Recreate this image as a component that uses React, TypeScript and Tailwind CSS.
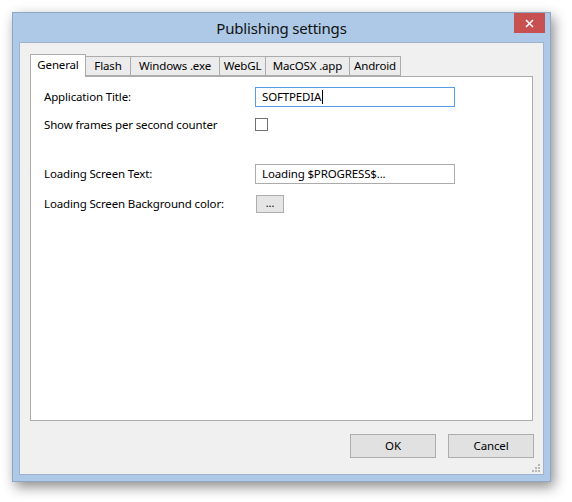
import React from 'react';

const tabs = [
  { label: 'General', w: 'w-[56px]' },
  { label: 'Flash', w: 'w-[46px]' },
  { label: 'Windows .exe', w: 'w-[90px]' },
  { label: 'WebGL', w: 'w-[47px]' },
  { label: 'MacOSX .app', w: 'w-[85px]' },
  { label: 'Android', w: 'w-[52px]' },
];

const font = { fontFamily: '"Noto Sans", "Open Sans", sans-serif' };

const App: React.FC = () => {
  return (
    <div className="w-[572px] h-[502px] bg-white pt-[12px] pl-[12px]" style={font}>
      {/* Window frame */}
      <div className="relative w-[539px] h-[470px] border border-[#8fa7c3] bg-[#adc9e7] flex flex-col shadow-[3px_5px_12px_rgba(0,0,0,0.45)]">
        {/* Title bar */}
        <div className="h-[29px] flex items-center justify-center text-[15px] tracking-[-0.2px] text-[#111] pt-[1px]">
          Publishing settings
        </div>
        <button className="absolute top-0 right-[5px] w-[31px] h-[20px] bg-[#c75050] flex items-center justify-center">
          <svg width="9" height="9" viewBox="0 0 9 9">
            <path d="M1 1 L8 8 M8 1 L1 8" stroke="#fff" strokeWidth="1.6" />
          </svg>
        </button>

        {/* Client area */}
        <div className="flex-1 mx-[6px] mb-[6px] border border-[#9fb4cc] bg-[#f0f0f0] flex flex-col pt-[10px] px-[10px] text-[11.5px] tracking-[-0.15px]">
          {/* Tab strip */}
          <div className="flex items-end h-[23px] text-black">
            {tabs.map((t, i) =>
              i === 0 ? (
                <div
                  key={t.label}
                  className={`${t.w} h-[23px] bg-white border border-b-0 border-[#acacac] flex justify-center items-start pt-[1px] relative z-10 -mb-[1px]`}
                >
                  {t.label}
                </div>
              ) : (
                <div
                  key={t.label}
                  className={`${t.w} h-[20px] bg-[#ececec] border border-[#acacac] -ml-[1px] flex justify-center items-center`}
                >
                  {t.label}
                </div>
              )
            )}
          </div>

          {/* Tab panel */}
          <div className="h-[345px] bg-white border border-[#acacac] pl-[13px] pt-[10px] text-black flex flex-col">
            <div className="flex items-center h-[20px]">
              <div className="w-[211px]">Application Title:</div>
              <div className="w-[200px] h-[20px] border border-[#569de5] flex items-center pl-[6px]">
                SOFTPEDIA
                <span className="inline-block w-[1px] h-[14px] bg-black ml-[1px]" />
              </div>
            </div>
            <div className="flex items-center h-[13px] mt-[11px]">
              <div className="w-[211px]">Show frames per second counter</div>
              <div className="w-[13px] h-[13px] border border-[#707070] bg-white" />
            </div>
            <div className="flex items-center h-[20px] mt-[33px]">
              <div className="w-[211px]">Loading Screen Text:</div>
              <div className="w-[200px] h-[20px] border border-[#ababab] flex items-center pl-[6px]">
                Loading $PROGRESS$...
              </div>
            </div>
            <div className="flex items-center h-[18px] mt-[11px]">
              <div className="w-[212px]">Loading Screen Background color:</div>
              <button className="w-[28px] h-[18px] border border-[#adadad] bg-[#e5e5e5] text-[11px] leading-none flex items-end justify-center pb-[4px]">
                ...
              </button>
            </div>
          </div>

          {/* Dialog buttons */}
          <div className="flex justify-end gap-[12px] mt-[13px] text-black -mr-[1px]">
            <button className="w-[86px] h-[24px] border border-[#adadad] bg-[#e1e1e1]">OK</button>
            <button className="w-[86px] h-[24px] border border-[#adadad] bg-[#e1e1e1]">Cancel</button>
          </div>

          {/* Size grip */}
          <div className="flex justify-end mt-[6px] -mr-[8px]">
            <svg width="9" height="9" viewBox="0 0 9 9">
              <rect x="6" y="0" width="2" height="2" fill="#b8b8b8" />
              <rect x="3" y="3" width="2" height="2" fill="#b8b8b8" />
              <rect x="6" y="3" width="2" height="2" fill="#b8b8b8" />
              <rect x="0" y="6" width="2" height="2" fill="#b8b8b8" />
              <rect x="3" y="6" width="2" height="2" fill="#b8b8b8" />
              <rect x="6" y="6" width="2" height="2" fill="#b8b8b8" />
            </svg>
          </div>
        </div>
      </div>
    </div>
  );
};

export default App;
